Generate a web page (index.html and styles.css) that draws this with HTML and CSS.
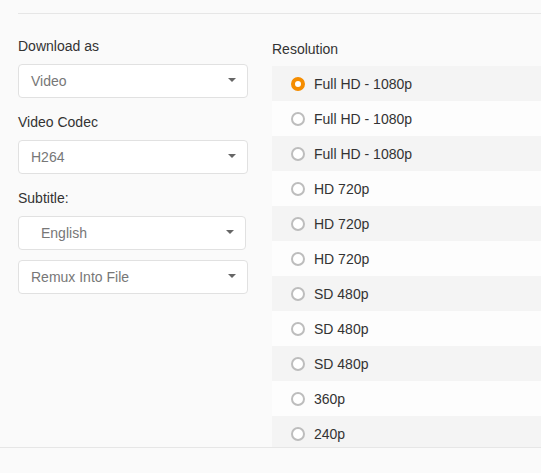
FILE: index.html
```html
<!DOCTYPE html>
<html>
<head>
<meta charset="utf-8">
<link rel="stylesheet" href="styles.css">
</head>
<body>
<div class="top-rule"></div>
<div class="main">
  <div class="left">
    <div class="group">
      <div class="label">Download as</div>
      <div class="select"><span>Video</span><i class="caret"></i></div>
    </div>
    <div class="group">
      <div class="label">Video Codec</div>
      <div class="select"><span>H264</span><i class="caret"></i></div>
    </div>
    <div class="group">
      <div class="label">Subtitle:</div>
      <div class="select select-lang"><span>English</span><i class="caret"></i></div>
      <div class="select select-mode"><span>Remux Into File</span><i class="caret"></i></div>
    </div>
  </div>
  <div class="right">
    <div class="label">Resolution</div>
    <div class="list">
      <div class="row"><span class="radio checked"></span>Full HD - 1080p</div>
      <div class="row"><span class="radio"></span>Full HD - 1080p</div>
      <div class="row"><span class="radio"></span>Full HD - 1080p</div>
      <div class="row"><span class="radio"></span>HD 720p</div>
      <div class="row"><span class="radio"></span>HD 720p</div>
      <div class="row"><span class="radio"></span>HD 720p</div>
      <div class="row"><span class="radio"></span>SD 480p</div>
      <div class="row"><span class="radio"></span>SD 480p</div>
      <div class="row"><span class="radio"></span>SD 480p</div>
      <div class="row"><span class="radio"></span>360p</div>
      <div class="row"><span class="radio"></span>240p</div>
    </div>
  </div>
</div>
</body>
</html>
```
FILE: styles.css
```css
html, body {
  margin: 0;
  padding: 0;
  background: #fafafa;
}
body {
  font-family: "Liberation Sans", Arial, sans-serif;
  font-size: 14px;
  color: #333;
  overflow: hidden;
}
.top-rule {
  height: 13px;
  margin-left: 18px;
  border-bottom: 1px solid #e6e6e6;
}
.main {
  display: flex;
  gap: 24px;
  height: 433px;
  padding-left: 18px;
  border-bottom: 1px solid #e6e6e6;
  overflow: hidden;
}
.left {
  width: 230px;
  flex: none;
  padding-top: 22px;
}
.group {
  margin-bottom: 14px;
}
.label {
  line-height: 20px;
  height: 20px;
  margin-bottom: 8px;
}
.select {
  box-sizing: border-box;
  height: 34px;
  width: 230px;
  background: #fff;
  border: 1px solid #e1e1e1;
  border-radius: 4px;
  display: flex;
  align-items: center;
  justify-content: space-between;
  padding: 0 11px 0 12px;
  color: #777;
}
.select-lang {
  width: 228px;
  padding-left: 22px;
  margin-bottom: 10px;
}
.caret {
  width: 0;
  height: 0;
  border-left: 4px solid transparent;
  border-right: 4px solid transparent;
  border-top: 4px solid #666;
  margin-top: -3px;
}
.right {
  flex: 1;
  padding-top: 25px;
  min-width: 0;
}
.right .label {
  margin-bottom: 7px;
}
.row {
  height: 35px;
  display: flex;
  align-items: center;
  padding-left: 19px;
  background: #fdfdfd;
}
.row:nth-child(odd) {
  background: #f4f4f4;
}
.radio {
  box-sizing: border-box;
  width: 14px;
  height: 14px;
  border-radius: 50%;
  border: 2px solid #bdbdbd;
  background: #fff;
  margin-right: 9px;
  flex: none;
}
.radio.checked {
  border: 4px solid #f58d00;
  background: #fff;
}
```
